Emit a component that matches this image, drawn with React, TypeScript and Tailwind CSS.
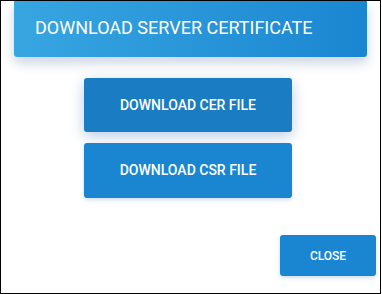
export default function App() {
  return (
    <div
      className="w-[381px] h-[294px] border border-black bg-white overflow-hidden relative"
      style={{ fontFamily: "Roboto, 'Liberation Sans', sans-serif" }}
    >
      <div className="mx-[13px] h-[57px] -mt-px rounded-b-[3px] bg-gradient-to-r from-[#37a6e1] to-[#1a86d1] shadow-[0_6px_12px_rgba(20,60,110,0.22)] flex items-center pl-[21px] pb-[3px]">
        <span className="text-white text-[18px] font-normal">DOWNLOAD SERVER CERTIFICATE</span>
      </div>
      <div className="flex flex-col items-center mt-[21px] gap-[11px] pr-[5px]">
        <button className="w-[208px] h-[54px] rounded-[3px] bg-[#1a7cc2] text-white text-[14px] font-medium shadow-[0_4px_14px_rgba(20,90,160,0.3)]">
          DOWNLOAD CER FILE
        </button>
        <button className="w-[208px] h-[55px] rounded-[3px] bg-[#1a86d1] text-white text-[14px] font-medium shadow-[0_2px_4px_rgba(20,90,160,0.2)]">
          DOWNLOAD CSR FILE
        </button>
      </div>
      <div className="flex justify-end mt-[37px] pr-[4px]">
        <button className="w-[96px] h-[41px] rounded-[3px] bg-[#1a86d1] text-white text-[12px] font-medium shadow-[0_2px_4px_rgba(20,90,160,0.2)]">
          CLOSE
        </button>
      </div>
    </div>
  );
}
